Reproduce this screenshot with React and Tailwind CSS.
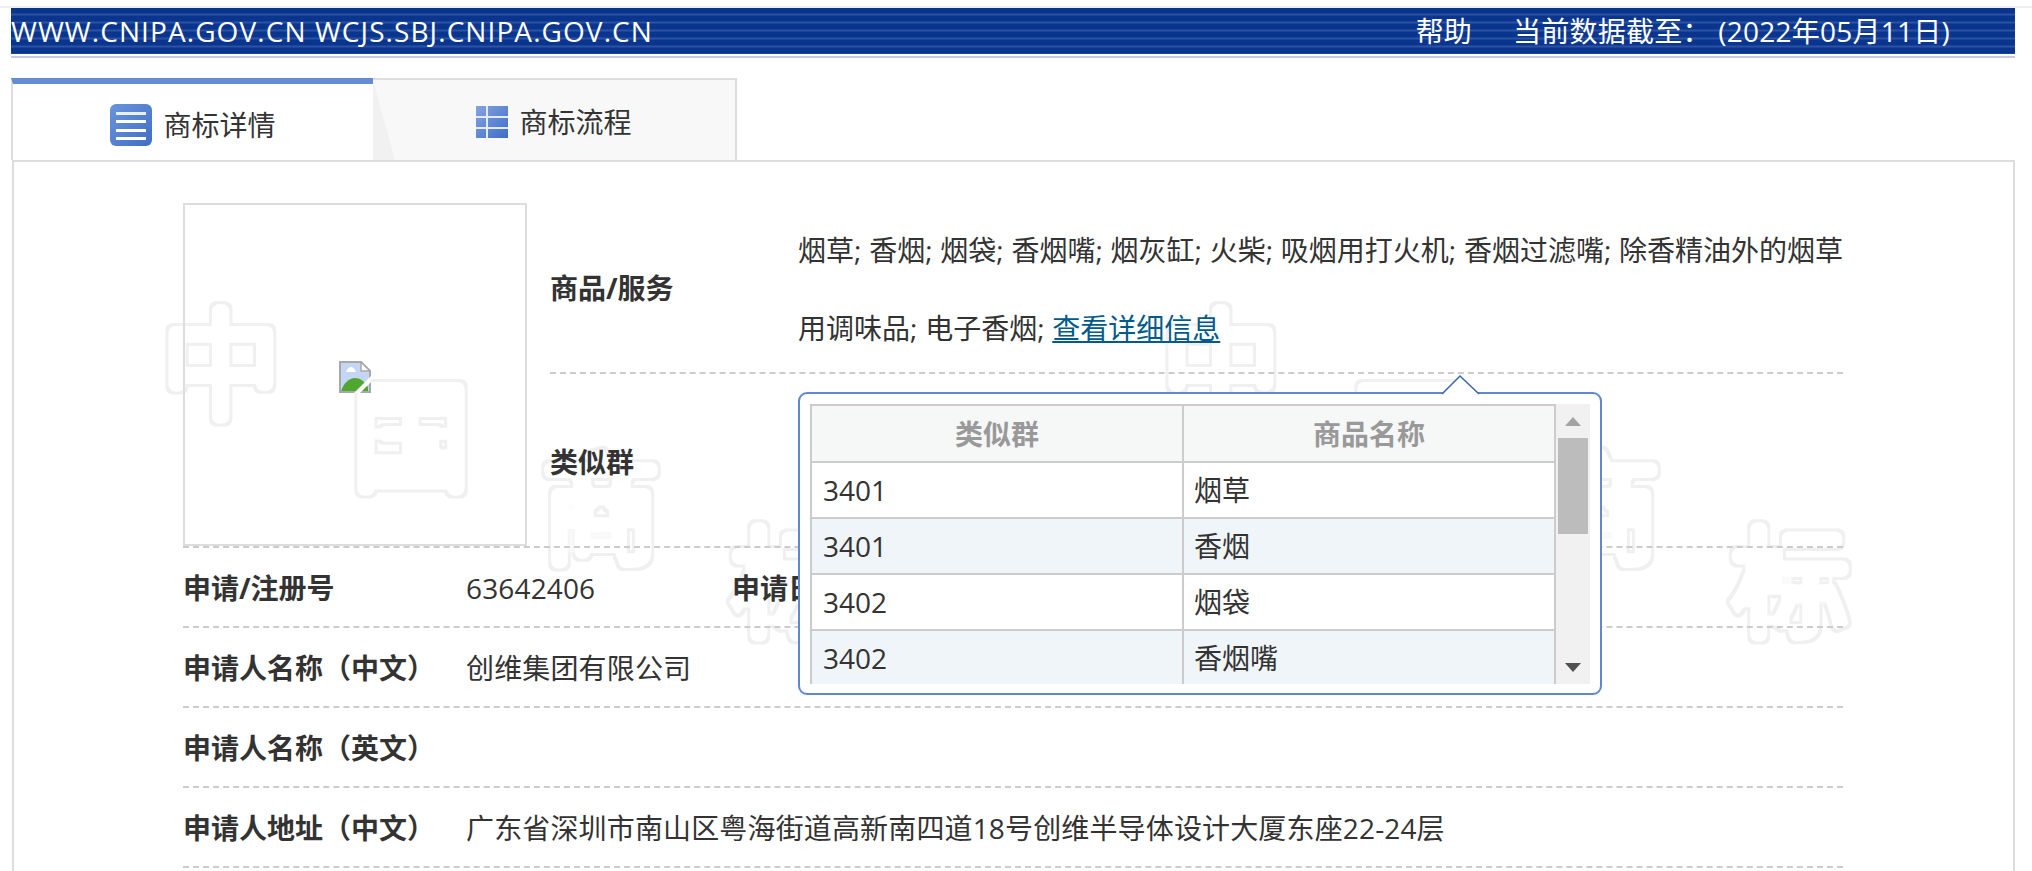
const rows = [
  ['3401', '烟草'],
  ['3401', '香烟'],
  ['3402', '烟袋'],
  ['3402', '香烟嘴'],
]

const marks = [
  ['中', 161, 410], ['国', 351, 482], ['商', 541, 555], ['标', 730, 628],
  ['中', 1161, 410], ['国', 1351, 482], ['商', 1541, 555], ['标', 1730, 628],
]

function Watermark() {
  return (
    <svg aria-hidden="true" className="absolute left-0 top-0 w-[2032px] h-[871px]" viewBox="0 0 2032 871">
      <defs>
        <filter id="ring" x="-25%" y="-25%" width="150%" height="150%">
          <feMorphology in="SourceGraphic" operator="erode" radius="2.5" result="inner" />
          <feComposite in="SourceGraphic" in2="inner" operator="out" />
        </filter>
      </defs>
      <g fontFamily="'Noto Sans CJK SC', sans-serif" fontSize="120" strokeLinejoin="round" strokeLinecap="round">
        {marks.map(([c, x, y], i) => (
          <text key={i} x={x} y={y} stroke="#f0f0f0" strokeWidth="14" fill="#f0f0f0" filter="url(#ring)">{c}</text>
        ))}
      </g>
    </svg>
  )
}

function DetailIcon() {
  return (
    <svg width="42" height="42" viewBox="0 0 42 42">
      <defs>
        <linearGradient id="detailBlue" x1="0" y1="0" x2="1" y2="1">
          <stop offset="0" stopColor="#6a94dc" />
          <stop offset="1" stopColor="#3f6fc6" />
        </linearGradient>
      </defs>
      <rect width="42" height="42" rx="6" fill="url(#detailBlue)" />
      <rect x="6" y="8" width="30" height="3" fill="#e9effa" />
      <rect x="6" y="16" width="30" height="3" fill="#fff" />
      <rect x="6" y="25" width="30" height="3" fill="#fff" />
      <rect x="6" y="33" width="30" height="3" fill="#fff" />
    </svg>
  )
}

function FlowIcon() {
  return (
    <svg width="32" height="32" viewBox="0 0 32 32">
      <defs>
        <linearGradient id="flowBlue" x1="0" y1="0" x2="1" y2="1">
          <stop offset="0" stopColor="#86a3e0" />
          <stop offset="1" stopColor="#3d6ec8" />
        </linearGradient>
      </defs>
      <rect width="32" height="32" fill="url(#flowBlue)" />
      <rect x="10" width="2" height="32" fill="#e4ebf8" />
      <rect y="10" width="32" height="2" fill="#e4ebf8" />
      <rect y="21" width="32" height="2" fill="#e4ebf8" />
    </svg>
  )
}

function BrokenImage() {
  return (
    <svg width="32" height="32" viewBox="0 0 32 32">
      <path d="M1 1h21l9 9v21H1z" fill="#c5d6f4" stroke="#a8a8a8" strokeWidth="2" />
      <path d="M22 1v9h9z" fill="#fff" stroke="#a8a8a8" strokeWidth="1.5" />
      <path d="M7 11c1-3 3-5 5-5s4 2 5 5z" fill="#fff" />
      <path d="M2 30c3-8 8-13 14-13 5 0 9 3 13 9v4z" fill="#4fa72f" />
      <path d="M15 32 32 15v6L21 32z" fill="#fff" />
    </svg>
  )
}

function SimilarPopup() {
  return (
    <div className="absolute left-[798px] top-[392px] z-10 w-[804px] h-[303px] rounded-[9px] border-2 border-[#5f88cf] bg-white p-[10px] flex">
      <svg className="absolute left-[641px] top-[-20px]" width="40" height="22" viewBox="0 0 40 22">
        <path d="M1 20 19 2l0 0L38 20" fill="#fff" stroke="#3c68ad" strokeWidth="1.6" />
        <rect x="3" y="19" width="33" height="3" fill="#fff" />
      </svg>
      <div className="w-[746px] h-[280px] overflow-hidden">
        <table className="w-[746px] table-fixed border-collapse">
          <thead>
            <tr className="h-[57px] bg-[#f6f7f7] text-[#999]">
              <th className="w-[372px] border-2 border-[#ccc] font-bold">类似群</th>
              <th className="border-2 border-[#ccc] font-bold">商品名称</th>
            </tr>
          </thead>
          <tbody>
            {rows.map(([group, name], i) => (
              <tr key={i} className={i % 2 ? 'h-[56px] bg-[#f0f5f9]' : 'h-[56px] bg-white'}>
                <td className="border-2 border-[#ccc] pl-[11px]">{group}</td>
                <td className="border-2 border-[#ccc] pl-[10px]">{name}</td>
              </tr>
            ))}
          </tbody>
        </table>
      </div>
      <div className="w-[34px] h-[280px] bg-[#f1f1f1] flex flex-col items-center">
        <div className="h-[34px] flex items-center justify-center">
          <svg width="16" height="9" viewBox="0 0 16 9"><path d="M8 0l8 9H0z" fill="#a3a3a3" /></svg>
        </div>
        <div className="w-[30px] h-[96px] bg-[#bcbcbc]" />
        <div className="flex-1" />
        <div className="h-[34px] flex items-center justify-center">
          <svg width="16" height="9" viewBox="0 0 16 9"><path d="M0 0h16l-8 9z" fill="#505050" /></svg>
        </div>
      </div>
    </div>
  )
}

function InfoRow({ label, value, extra }) {
  return (
    <div className="h-[80px] border-b-2 border-dashed border-[#ccc] flex items-center pt-[2px]">
      <span className="w-[283px] font-bold">{label}</span>
      <span className="w-[266px] tracking-[0.15px]">{value}</span>
      {extra && <span className="font-bold">{extra}</span>}
    </div>
  )
}

export default function App() {
  return (
    <div className="relative h-[871px] overflow-hidden bg-white text-[28px] text-[#333] font-['Open_Sans','Noto_Sans_CJK_SC',sans-serif]">
      <Watermark />
      <div className="relative">
        <div className="h-[6px]" />
        <div className="h-[2px] bg-[#eee]" />
        <div className="ml-[11px] w-[2004px] h-[46px] leading-[46px] text-white flex justify-between bg-[repeating-linear-gradient(180deg,#0a358f_0px,#0a358f_5px,#2c52a2_6px,#2c52a2_7px,#0a358f_8px)]">
          <span className="tracking-[1.08px]">WWW.CNIPA.GOV.CN WCJS.SBJ.CNIPA.GOV.CN</span>
          <div className="flex gap-[41px] pr-[65px]">
            <span>帮助</span>
            <span className="tracking-[0.25px]">当前数据截至： (2022年05月11日)</span>
          </div>
        </div>
        <div className="ml-[11px] w-[2004px] mt-[2px] h-[2px] bg-[#c6c8e6]" />

        <div className="ml-[11px] mt-[20px] flex h-[82px]">
          <div className="w-[362px] h-[82px] border-t-[6px] border-[#648cd2] border-l-2 border-l-[#ddd] bg-white flex items-center justify-center gap-[11px] pt-[6px]">
            <DetailIcon />
            <span>商标详情</span>
          </div>
          <div className="relative w-[364px] h-[82px] border-2 border-b-0 border-[#ddd] border-l-0 bg-[#f8f8f8] flex items-center justify-center gap-[11px] pt-[3px]">
            <div className="absolute left-0 top-0 w-[22px] h-[80px] bg-[#f1f1f1] [clip-path:polygon(0_0,100%_100%,0_100%)]" />
            <FlowIcon />
            <span className="relative">商标流程</span>
          </div>
        </div>

        <div className="ml-[12px] w-[2003px] h-[720px] border-2 border-[#ddd] pl-[169px] pt-[41px]">
          <div className="w-[1660px]">
            <div className="h-[345px] border-b-2 border-dashed border-[#ccc] flex gap-[23px]">
              <div className="w-[344px] h-[343px] border-2 border-[#ddd] flex items-center justify-center pt-[5px] shrink-0">
                <BrokenImage />
              </div>
              <div className="flex-1">
                <div className="h-[171px] border-b-2 border-dashed border-[#ccc] flex items-center">
                  <span className="w-[248px] font-bold shrink-0">商品/服务</span>
                  <p className="w-[1045px] whitespace-nowrap leading-[78px] pt-[2px] [word-spacing:0.5px]">
                    烟草; 香烟; 烟袋; 香烟嘴; 烟灰缸; 火柴; 吸烟用打火机; 香烟过滤嘴; 除香精油外的烟草<br />
                    用调味品; 电子香烟; <a href="#" className="underline text-[#005a8c]">查看详细信息</a>
                  </p>
                </div>
                <div className="h-[172px] flex items-center pt-[4px]">
                  <span className="font-bold">类似群</span>
                </div>
              </div>
            </div>
            <InfoRow label="申请/注册号" value="63642406" extra="申请日期" />
            <InfoRow label="申请人名称（中文）" value="创维集团有限公司" />
            <InfoRow label="申请人名称（英文）" value="" />
            <div className="h-[80px] border-b-2 border-dashed border-[#ccc] flex items-center pt-[2px]">
              <span className="w-[283px] font-bold">申请人地址（中文）</span>
              <span className="tracking-[0.15px]">广东省深圳市南山区粤海街道高新南四道18号创维半导体设计大厦东座22-24层</span>
            </div>
          </div>
        </div>
      </div>

      <SimilarPopup />
    </div>
  )
}
